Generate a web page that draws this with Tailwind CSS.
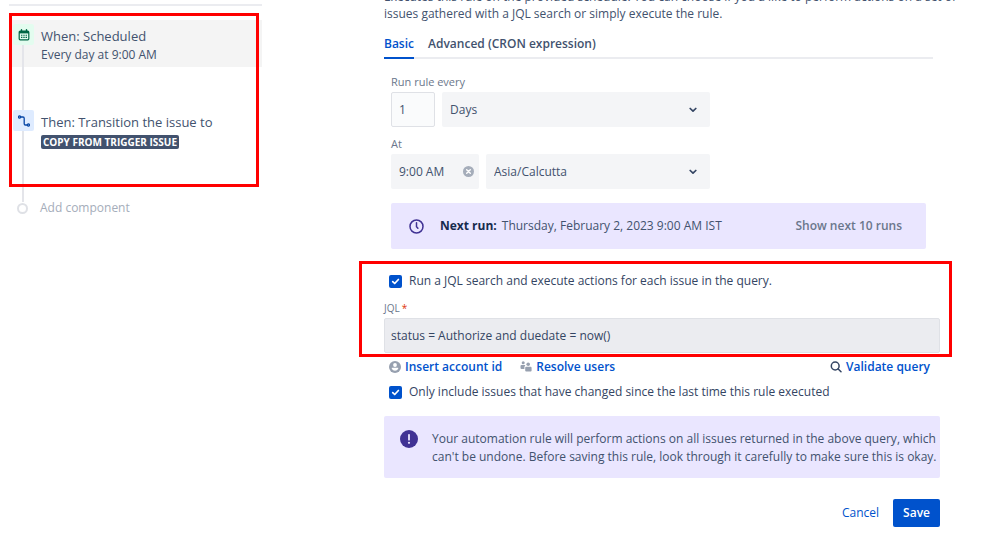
<!DOCTYPE html>
<html lang="en">
<head>
    <meta charset="UTF-8">
    <meta name="viewport" content="width=device-width, initial-scale=1.0">
    <title>Automation rule</title>
    <script src="https://cdn.jsdelivr.net/npm/@tailwindcss/browser@4"></script>
</head>
<body class="flex items-start bg-white text-[#42526e] text-[12px] leading-[18px] font-['Open_Sans','Noto_Sans',sans-serif] overflow-x-hidden">
    <!-- Rule steps -->
    <aside class="relative w-[262px] shrink-0 pl-[9px] pt-1">
        <div class="h-[2px] bg-[#ebecf0]"></div>
        <ol class="mt-[14px]">
            <li class="relative flex h-[90px]">
                <div class="absolute left-[13px] top-[25px] bottom-0 w-[2px] bg-[#e4e5ea] z-10"></div>
                <a href="#" class="flex flex-1 h-[47px] bg-[#f4f4f4] pl-1 pt-1 gap-[7px]">
                    <span class="flex items-center justify-center size-[21px] rounded-xs bg-[#e3fcef]">
                        <svg class="size-3" viewBox="0 0 12 12" fill="none">
                            <path d="M3.5 0.8v2M8.5 0.8v2" stroke="#006644" stroke-width="1.4" stroke-linecap="round"/>
                            <rect x="1.2" y="2.2" width="9.6" height="8.6" rx="1" stroke="#006644" stroke-width="1.2"/>
                            <path d="M1 2h10v2.4H1z" fill="#006644"/>
                            <path d="M3 6.2h6M3 8.4h6" stroke="#006644" stroke-width="1.1" stroke-dasharray="1.4 0.9"/>
                        </svg>
                    </span>
                    <span>
                        <span class="block text-[13px] leading-6">When: Scheduled</span>
                        <span class="block leading-[14px]">Every day at 9:00 AM</span>
                    </span>
                </a>
            </li>
            <li class="relative flex h-[92px] pl-1 gap-[7px]">
                <div class="absolute left-[13px] top-[21px] bottom-0 w-[2px] bg-[#e4e5ea]"></div>
                <span class="flex items-center justify-center size-[21px] rounded-xs bg-[#deebff]">
                    <svg class="size-3" viewBox="0 0 12 12" fill="none" stroke="#0747a6" stroke-width="1.3" stroke-linecap="round">
                        <circle cx="1.6" cy="2" r="1.1"/>
                        <circle cx="10.4" cy="10" r="1.1"/>
                        <path d="M2.8 2H5q1.2 0 1.2 1.2v5.6Q6.2 10 7.4 10h1.8"/>
                    </svg>
                </span>
                <div>
                    <div class="text-[13px] leading-6">Then: Transition the issue to</div>
                    <span class="flex items-center w-fit h-[14px] mt-[1px] px-[2px] rounded-xs bg-[#42526e] text-white text-[10px] leading-none font-bold uppercase">Copy from trigger issue</span>
                </div>
            </li>
            <li class="flex items-center h-3 pl-2 gap-3">
                <span class="size-[11px] rounded-full border-2 border-[#dfe1e6] bg-white"></span>
                <a href="#" class="text-[#a5adba]">Add component</a>
            </li>
        </ol>
        <div class="absolute left-[9px] top-[13px] w-[250px] h-[174px] border-3 border-[#ff0000] pointer-events-none z-20"></div>
    </aside>

    <!-- Trigger settings -->
    <main class="flex-1 min-w-0 pl-[122px] pr-[59px] -mt-[12px]">
        <p class="leading-[17px] -mr-5">Executes this rule on the provided schedule. You can choose if you'd like to perform actions on a set of issues gathered with a JQL search or simply execute the rule.</p>

        <nav class="flex gap-[14px] mt-[13px] mr-[7px] border-b-2 border-[#ebecf0] font-semibold">
            <a href="#" class="pb-1 -mb-[2px] border-b-2 border-[#0052cc] text-[#0052cc]">Basic</a>
            <a href="#" class="pb-1">Advanced (CRON expression)</a>
        </nav>

        <form>
            <div class="pl-[7px] pr-[14px] pt-[14px]">
                <label for="every" class="block mb-[1px] text-[11px] text-[#6b778c] font-medium">Run rule every</label>
                <div class="flex gap-[7px]">
                    <input id="every" type="text" value="1" class="w-11 h-[35px] px-[7px] rounded-xs border border-[#dfe1e6] bg-[#fafbfc]">
                    <div class="relative w-[268px]">
                        <select aria-label="Unit" class="appearance-none w-full h-[35px] px-2 rounded-xs bg-[#f4f5f7]"><option>Days</option></select>
                        <svg class="absolute right-[13px] top-[14px] w-2 h-2 pointer-events-none" viewBox="0 0 8 8" fill="none" stroke="#344563" stroke-width="1.7" stroke-linecap="round" stroke-linejoin="round"><path d="M1.2 2.5L4 5.2 6.8 2.5"/></svg>
                    </div>
                </div>

                <label for="at" class="block mt-2 mb-[1px] text-[11px] text-[#6b778c] font-medium">At</label>
                <div class="flex gap-[7px]">
                    <div class="relative w-[88px]">
                        <input id="at" type="text" value="9:00 AM" class="w-full h-[35px] px-2 rounded-xs bg-[#f4f5f7]">
                        <button type="button" aria-label="Clear" class="absolute right-[5px] top-3">
                            <svg class="size-[11px]" viewBox="0 0 11 11"><circle cx="5.5" cy="5.5" r="5.5" fill="#a5adba"/><path d="M3.7 3.7l3.6 3.6M7.3 3.7L3.7 7.3" stroke="#fff" stroke-width="1.4" stroke-linecap="round"/></svg>
                        </button>
                    </div>
                    <div class="relative w-[224px]">
                        <select aria-label="Time zone" class="appearance-none w-full h-[35px] px-2 rounded-xs bg-[#f4f5f7]"><option>Asia/Calcutta</option></select>
                        <svg class="absolute right-[13px] top-[14px] w-2 h-2 pointer-events-none" viewBox="0 0 8 8" fill="none" stroke="#344563" stroke-width="1.7" stroke-linecap="round" stroke-linejoin="round"><path d="M1.2 2.5L4 5.2 6.8 2.5"/></svg>
                    </div>
                </div>

                <div class="flex items-center h-[46px] mt-[14px] pl-[18px] pr-6 rounded-xs bg-[#eae6ff]">
                    <svg class="size-[15px] mr-4" viewBox="0 0 15 15" fill="none" stroke="#403294" stroke-width="1.5" stroke-linecap="round"><circle cx="7.5" cy="7.5" r="6.5"/><path d="M7.5 3.8v3.9l1.4 1.6"/></svg>
                    <strong class="text-[#172b4d] mr-[5px]">Next run:</strong>
                    <span>Thursday, February 2, 2023 9:00 AM IST</span>
                    <button type="button" class="ml-auto font-semibold text-[#6b778c]">Show next 10 runs</button>
                </div>
            </div>

            <div class="relative mt-[23px]">
                <label class="flex items-center pl-[5px] gap-[7px] text-[#344563]">
                    <span class="relative size-[13px]">
                        <input type="checkbox" checked class="block appearance-none size-[13px] rounded-xs bg-[#0052cc]">
                        <svg class="absolute inset-0 size-[13px] pointer-events-none" viewBox="0 0 13 13" fill="none" stroke="#fff" stroke-width="1.7" stroke-linecap="round" stroke-linejoin="round"><path d="M3.7 6.6l2 1.9 3.7-4"/></svg>
                    </span>
                    Run a JQL search and execute actions for each issue in the query.
                </label>
                <label for="jql" class="block mt-[9px] text-[10px] text-[#6b778c] font-medium">JQL<span class="text-[#de350b] pl-[2px]">*</span></label>
                <input id="jql" type="text" value="status = Authorize and duedate = now()" class="block w-full h-[35px] mt-[1px] px-[6px] rounded-xs border border-[#dfe1e6] bg-[#ebecf0] text-[#344563]">
                <div class="absolute -left-[25px] -right-[12px] -top-[11px] h-[96px] border-3 border-[#ff0000] pointer-events-none"></div>
            </div>

            <div class="flex items-center mt-[5px] pl-[5px] pr-[10px] font-semibold text-[#0052cc]">
                <a href="#" class="flex items-center gap-1">
                    <svg class="size-3" viewBox="0 0 12 12"><circle cx="6" cy="6" r="6" fill="#97a0af"/><circle cx="6" cy="4" r="1.9" fill="#fff"/><path d="M2.8 6.8h6.4v1q-1 2-3.2 2t-3.2-2z" fill="#fff"/></svg>
                    Insert account id
                </a>
                <a href="#" class="flex items-center gap-1 ml-[18px]">
                    <svg class="size-3" viewBox="0 0 12 12" fill="#97a0af"><circle cx="3.2" cy="1.8" r="1.5"/><circle cx="8.2" cy="3.3" r="1.8"/><path d="M.5 5q0-1 1-1h3.4q.4 0 .4.6-.9.7-.9 2V8H1.5q-1 0-1-1zM5.2 6.8q0-1.1 1.1-1.1h4.2q1.1 0 1.1 1.1v2.7q0 1-1 1H6.2q-1 0-1-1z"/></svg>
                    Resolve users
                </a>
                <a href="#" class="flex items-center gap-1 ml-auto">
                    <svg class="size-3" viewBox="0 0 12 12" fill="none" stroke="#344563" stroke-width="1.5" stroke-linecap="round"><circle cx="5.2" cy="5" r="3.9"/><path d="M8.2 8l2.8 2.8"/></svg>
                    Validate query
                </a>
            </div>

            <label class="flex items-center mt-[7px] pl-[5px] gap-[7px] text-[#344563]">
                <span class="relative size-[13px]">
                    <input type="checkbox" checked class="block appearance-none size-[13px] rounded-xs bg-[#0052cc]">
                    <svg class="absolute inset-0 size-[13px] pointer-events-none" viewBox="0 0 13 13" fill="none" stroke="#fff" stroke-width="1.7" stroke-linecap="round" stroke-linejoin="round"><path d="M3.7 6.6l2 1.9 3.7-4"/></svg>
                </span>
                Only include issues that have changed since the last time this rule executed
            </label>

            <div class="flex mt-[15px] pt-[14px] pb-3 pl-4 gap-[14px] rounded-xs bg-[#eae6ff]">
                <svg class="size-[18px] shrink-0" viewBox="0 0 18 18"><circle cx="9" cy="9" r="9" fill="#403294"/><path d="M9 4.8v4.9" stroke="#eae6ff" stroke-width="1.8" stroke-linecap="round"/><circle cx="9" cy="12.8" r="1.1" fill="#eae6ff"/></svg>
                <p>Your automation rule will perform actions on all issues returned in the above query, which can't be undone. Before saving this rule, look through it carefully to make sure this is okay.</p>
            </div>

            <div class="flex justify-end gap-[14px] mt-[21px] font-semibold">
                <button type="button" class="text-[#0052cc] font-medium">Cancel</button>
                <button type="submit" class="h-7 px-[10px] rounded-xs bg-[#0052cc] text-white">Save</button>
            </div>
        </form>
    </main>
</body>
</html>
